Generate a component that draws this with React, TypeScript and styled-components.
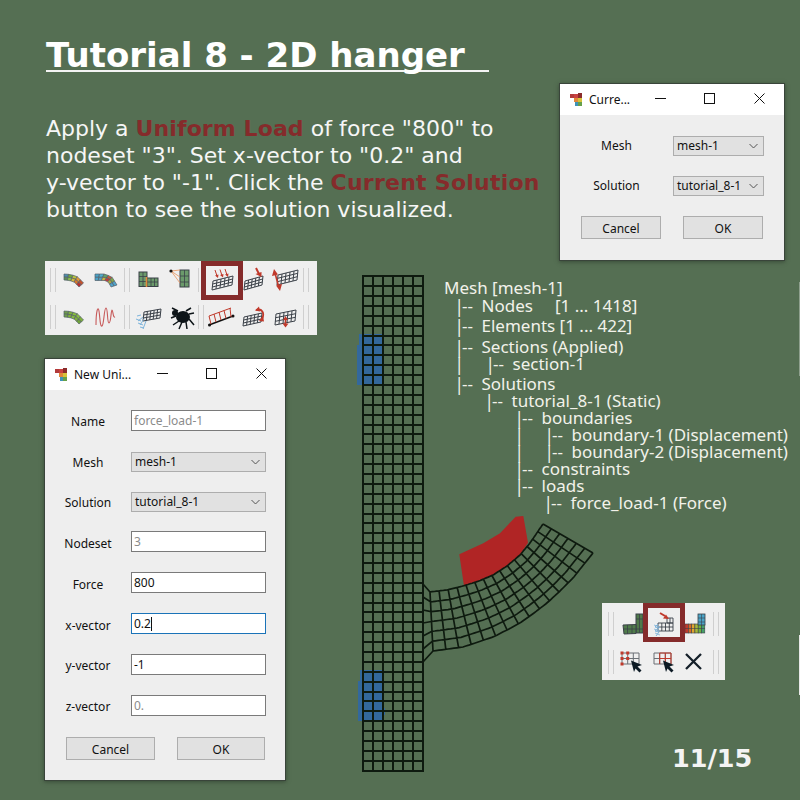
import React from "react";
import styled, { createGlobalStyle } from "styled-components";

const Global = createGlobalStyle`
  html, body { margin: 0; padding: 0; background: #556f53; }
`;

const Slide = styled.div`
  position: relative; width: 800px; height: 800px; overflow: hidden; background: #556f53;
  font-family: "DejaVu Sans", sans-serif; color: #fff;
`;
const Intro = styled.div`
  position: absolute; left: 46px; top: 34px; width: 500px;
`;
const Title = styled.h1`
  margin: 0; width: 443px; font-size: 34px; line-height: 42px; font-weight: 700; white-space: pre;
  border-bottom: 2px solid #f4f4f4; height: 36px;
`;
const Body = styled.p`
  margin: 43px 0 0; font-size: 22px; line-height: 27px; white-space: nowrap; color: #f6f6f6;
`;
const Hl = styled.b<{ $ls: number }>`color: #852b2b; letter-spacing: ${p => p.$ls}px;`;
const Tail = styled.span`letter-spacing: .06px;`;

const Win = styled.div<{ $x: number; $y: number; $w: number; $h: number }>`
  position: absolute; left: ${p => p.$x}px; top: ${p => p.$y}px; width: ${p => p.$w}px; height: ${p => p.$h}px;
  box-sizing: border-box; border: 1px solid #39443a; background: #eeeeee;
  font-family: "Noto Sans", sans-serif; font-size: 12px; color: #111;
  box-shadow: 0 1px 4px rgba(30, 40, 30, .5);
`;
const TitleBar = styled.div`
  height: 31px; background: #fff; display: flex; align-items: center; padding-left: 10px; position: relative;
`;
const TitleText = styled.span`margin-left: 5px; font-size: 12px;`;
const WinCtl = styled.svg<{ $right: number }>`
  position: absolute; right: ${p => p.$right}px; top: 9px;
`;
const FormRow = styled.div<{ $pitch: number; $labelW: number }>`
  display: grid; grid-template-columns: ${p => p.$labelW}px 1fr; align-items: center;
  height: 21px; margin-bottom: ${p => p.$pitch - 21}px;
`;
const Label = styled.span<{ $pt: number }>`text-align: center; padding-top: ${p => p.$pt}px;`;
const Field = styled.div<{ $muted?: boolean; $focus?: boolean }>`
  box-sizing: border-box; height: 21px; background: #fff; border: 1px solid ${p => p.$focus ? "#1a73b8" : "#7a7a7a"};
  color: ${p => p.$muted ? "#8b8b8b" : "#111"}; padding-left: 2px; line-height: 20px; position: relative; white-space: nowrap;
`;
const Caret = styled.i`display: inline-block; width: 1px; height: 14px; background: #111; vertical-align: -3px;`;
const Select = styled.div`
  box-sizing: border-box; height: 20px; background: #e1e1e1; border: 1px solid #adadad; padding-left: 3px;
  line-height: 17px; position: relative; white-space: nowrap;
  svg { position: absolute; right: 5px; top: 6px; }
`;
const Form = styled.div<{ $top: number; $right: number }>`
  padding: ${p => p.$top}px ${p => p.$right}px 0 0;
`;
const Buttons = styled.div<{ $left: number; $gap: number }>`
  display: flex; gap: ${p => p.$gap}px; padding-left: ${p => p.$left}px;
`;
const Btn = styled.div<{ $w: number; $h: number }>`
  box-sizing: border-box; width: ${p => p.$w}px; height: ${p => p.$h}px; background: #e1e1e1; border: 1px solid #adadad;
  display: flex; align-items: center; justify-content: center; padding-top: 1px;
`;

const Toolbar = styled.div<{ $x: number; $y: number; $w: number; $h: number; $pad: number }>`
  position: absolute; left: ${p => p.$x}px; top: ${p => p.$y}px; width: ${p => p.$w}px; height: ${p => p.$h}px;
  background: #efefef; box-sizing: border-box; padding-left: ${p => p.$pad}px; display: flex; flex-direction: column;
`;
const TRow = styled.div<{ $mt: number }>`
  display: flex; height: 24px; margin-top: ${p => p.$mt}px; align-items: center;
`;
const Sep = styled.div`
  width: 6px; height: 24px; margin: 0 1px 0 0; flex: none; box-sizing: border-box;
  border-left: 1px solid #cfcfcf; border-right: 1px solid #cfcfcf;
`;
const IconBox = styled.div`
  width: 32px; height: 32px; flex: none; display: flex; align-items: center; justify-content: center;
`;
const Gap = styled.div<{ $w: number }>`width: ${p => p.$w}px; flex: none;`;
const RedBox = styled.div<{ $x: number; $y: number }>`
  position: absolute; left: ${p => p.$x}px; top: ${p => p.$y}px; width: 42px; height: 39px; box-sizing: border-box;
  border: 5px solid #852b2b;
`;

const MeshWrap = styled.svg`position: absolute; left: 340px; top: 260px;`;
const Tree = styled.div`
  position: absolute; left: 444px; top: 279px; font-family: "Noto Sans", sans-serif; font-size: 17px; line-height: 17px;
  color: #f2f2ea; white-space: pre;
`;
const TreeLine = styled.div<{ $i: number; $mt?: number }>`
  padding-left: ${p => p.$i}px; margin-top: ${p => p.$mt || 0}px; height: 17px;
`;
const Pipe = styled.span<{ $skip?: number }>`
  display: inline-block; width: 4px; margin-left: ${p => p.$skip || 0}px; text-indent: -3.5px; transform: scaleY(1.08); color: #f2f2ea;
`;
const Dash = styled.span`display: inline-block; width: 19.5px;`;
const Page = styled.div`
  position: absolute; left: 672px; top: 743px; font-size: 25.5px; line-height: 30px; font-weight: 700; color: #f4f4f4;
`;
const EdgeMark = styled.div<{ $y: number; $h: number; $c: string }>`
  position: absolute; right: 0; top: ${p => p.$y}px; width: 1px; height: ${p => p.$h}px; background: ${p => p.$c};
`;

const Ctl = ({ r, k }: { r: number; k: "min" | "max" | "x" }) => (
  <WinCtl $right={r} width="11" height="11" viewBox="0 0 11 11" fill="none" stroke="#111">
    {k === "min" && <path d="M0 5.500h11" />}
    {k === "max" && <rect x=".5" y=".5" width="10" height="10" />}
    {k === "x" && <path d="M.5.5l10 10M10.500.5l-10 10" />}
  </WinCtl>
);
const AppIcon = () => (
  <svg width="14" height="14" viewBox="0 0 14 14">
    <rect x="0" y="1" width="4" height="4" fill="#b23b3b" />
    <rect x="4" y="1" width="4" height="4" fill="#c94141" />
    <rect x="8" y="0" width="4" height="5" fill="#8a2b2b" />
    <rect x="4" y="5" width="4" height="4" fill="#e0883a" />
    <rect x="8" y="5" width="4" height="4" fill="#d6c23a" />
    <rect x="5" y="9" width="3" height="4" fill="#3f93b8" />
    <rect x="8" y="9" width="4" height="4" fill="#66a04a" />
  </svg>
);
const Chevron = () => (
  <svg width="9" height="6" viewBox="0 0 9 6" fill="none" stroke="#555"><path d="M.5 1l4 4 4-4" /></svg>
);

/* ---- toolbar drawings ---- */
const INK = "#3b4149";
const RED = "#c0392b";
const BLUE = "#7db4dc";
const Ic = ({ children }: { children: React.ReactNode }) => (
  <IconBox><svg width="32" height="32" viewBox="0 0 32 32" fill="none">{children}</svg></IconBox>
);
const skew = (x0: number, y0: number, w: number, h: number, c: number, r: number, dy: number, dx = 1) => {
  let d = "";
  const P = (u: number, v: number) => `${(x0 + u * w + (1 - v) * dx).toFixed(1)} ${(y0 + v * h - u * dy).toFixed(1)}`;
  for (let i = 0; i <= c; i++) d += `M${P(i / c, 0)}L${P(i / c, 1)}`;
  for (let j = 0; j <= r; j++) d += `M${P(0, j / r)}L${P(1, j / r)}`;
  return d;
};
const G = (p: { x: number; y: number; w?: number; h?: number; c?: number; r?: number; dy?: number }) => (
  <path d={skew(p.x, p.y, p.w ?? 19, p.h ?? 9, p.c ?? 5, p.r ?? 3, p.dy ?? 5)} stroke={INK} strokeWidth="1" />
);
const along = (pts: number[][], t: number) => {
  const seg = pts.slice(1).map((p, i) => Math.hypot(p[0] - pts[i][0], p[1] - pts[i][1]));
  let rest = t * seg.reduce((a, b) => a + b, 0);
  for (let i = 0; i < seg.length; i++) {
    if (rest <= seg[i] || i === seg.length - 1) {
      const f = rest / seg[i];
      return [pts[i][0] + (pts[i + 1][0] - pts[i][0]) * f, pts[i][1] + (pts[i + 1][1] - pts[i][1]) * f];
    }
    rest -= seg[i];
  }
  return pts[pts.length - 1];
};
const Band = ({ up, lo, cols }: { up: number[][]; lo: number[][]; cols: string[][] }) => {
  const nc = cols[0].length;
  const q = (u: number, v: number) => {
    const a = along(up, u), b = along(lo, u);
    return `${(a[0] + (b[0] - a[0]) * v).toFixed(1)} ${(a[1] + (b[1] - a[1]) * v).toFixed(1)}`;
  };
  return (
    <Ic>
      {cols.map((row, r) => row.map((c, i) => (
        <path key={`${r}-${i}`} d={`M${q(i / nc, r / 2)}L${q((i + 1) / nc, r / 2)}L${q((i + 1) / nc, (r + 1) / 2)}L${q(i / nc, (r + 1) / 2)}Z`} fill={c} stroke="#55606a" strokeWidth=".7" />
      )))}
    </Ic>
  );
};
const UP = [[6, 10], [13, 10.5], [20, 13], [25.5, 19]];
const LO = [[6, 16], [12, 16.5], [17, 18.5], [21, 23]];
const Rainbow = () => <Band up={UP} lo={LO} cols={[["#4d8fb0", "#6da83a", "#b9c23a", "#e59a2f", "#c8502b"], ["#5f8f55", "#8cc14a", "#d6b93a", "#d9772b", "#b92f2f"]]} />;
const Rainbow2 = () => <Band up={[[5, 10], [15, 10], [22, 13], [27, 21]]} lo={[[5, 16.500], [15, 16.500], [18.500, 18], [21, 23]]} cols={[["#49a3c9", "#4fb0cf", "#5fa06a", "#c05a3a", "#7fa84a", "#4fa3c9"], ["#49a3c9", "#4f9fbf", "#d0b53a", "#c23a3a", "#b0a83a", "#4fa3c9"]]} />;
const Green = () => <Band up={UP} lo={LO} cols={[["#6f9f4a", "#7fb23a", "#86bb3e", "#86bb3e", "#7fb23a"], ["#6f9f4a", "#7fb23a", "#86bb3e", "#7fb23a", "#70a43a"]]} />;
const Merge = () => (
  <Ic>
    <rect x="7" y="8" width="8" height="14.500" fill="#6b9a6b" stroke={INK} />
    <rect x="15" y="14" width="11" height="8.500" fill="#6b9a6b" stroke={INK} />
    <path d="M11 8v14.500M7 12.500h8M7 17.500h8M19 14v8.500M22.500 14v8.500M15 18h11" stroke={INK} strokeWidth=".8" />
    <path d="M14.500 13v10" stroke="#e08a3c" strokeWidth="1.600" />
  </Ic>
);
const Probe = () => (
  <Ic>
    <rect x="14" y="6" width="9" height="17" fill="#6b9a6b" stroke={INK} />
    <path d="M18.500 6v17M14 12h9M14 18h9" stroke={INK} strokeWidth=".8" />
    <path d="M5 7L14 6M5 7L14 13M5 7L14 19" stroke="#e8935a" strokeWidth=".8" />
    <circle cx="5" cy="7" r="1.600" fill="#111" />
  </Ic>
);
const Load = () => (
  <Ic>
    <G x={6} y={17} w={20} h={9} c={5} r={3} dy={5} />
    <path d="M9 6l2 6M14 5.500l2 6M19 5l2 6" stroke={RED} strokeWidth="1" />
    <path d="M12 14l-3-2.500 3.500-1zM17 13.500l-3-2.500 3.500-1zM22 13l-3-2.500 3.500-1z" fill={RED} />
  </Ic>
);
const Force = () => (
  <Ic>
    <G x={6} y={17} w={18} h={9} />
    <path d="M18 4l3 6" stroke={RED} strokeWidth="2" />
    <path d="M23.500 13l-6-3 6-2z" fill={RED} />
  </Ic>
);
const Double = () => (
  <Ic>
    <G x={7} y={11} w={20} h={10} dy={5} />
    <path d="M5 9l4 15" stroke={RED} strokeWidth="1.600" />
    <path d="M4 5l-2 7 6-1.500zM10 27l2-7-6 1.500z" fill={RED} />
  </Ic>
);
const Wave = () => (
  <Ic>
    <path d="M6 24C6 10 8 4 9 10s1 16 3 15 2-18 4-18 1 15 3 15 2-13 3-13 1 8 3 7" stroke="#c75a5a" strokeWidth="1.100" />
  </Ic>
);
const Spray = () => (
  <Ic>
    <G x={11} y={11} w={17} h={9} dy={3} />
    <path d="M11 16L6 20M12 18L8 24M14 20L11 28M9 14L5 15" stroke={BLUE} strokeWidth="1" />
    <path d="M4 18l5 2M6 22l5 2M8 26l4 1" stroke={BLUE} strokeWidth="1" />
  </Ic>
);
const Spider = () => (
  <Ic>
    <ellipse cx="17" cy="16" rx="7" ry="6" fill="#0d1418" />
    <circle cx="9" cy="12" r="3" fill="#0d1418" />
    <path d="M12 10L6 7M13 20L7 24M16 21L13 28M20 21L21 28M23 18L28 24M23 13L28 12M20 10L25 7M10 15L5 17" stroke="#0d1418" strokeWidth="1.500" />
  </Ic>
);
const Beam = () => (
  <Ic>
    <path d="M3 24L27 15" stroke="#111" strokeWidth="1.400" />
    <circle cx="3.500" cy="24" r="1.500" fill="#111" />
    <circle cx="27" cy="15" r="1.500" fill="#111" />
    <path d="M3 15L25 7M5 23L3 15M10 21L8 13M15 19L13 11M20 17.500L18 9.500M25 16L24 7" stroke={RED} strokeWidth="1" />
  </Ic>
);
const Moment = () => (
  <Ic>
    <G x={5} y={16} w={18} h={9} dy={4} />
    <path d="M18 9c6-2 9 3 6 9" stroke={RED} strokeWidth="1.800" />
    <path d="M21 20l5 .5-1-6zM21 5.500l-4 4 5 1z" fill={RED} />
  </Ic>
);
const Thick = () => (
  <Ic>
    <G x={5} y={13} w={20} h={11} dy={4} />
    <path d="M15.500 17v7" stroke={RED} strokeWidth="1.600" />
    <path d="M12.500 22.500h6l-3 4zM13 19h5l-2.500-4z" fill={RED} />
  </Ic>
);
const L1 = () => (
  <Ic>
    <rect x="19" y="6" width="7" height="19" fill="#4f7a4a" stroke={INK} />
    <path d="M6 17l13-.5v9l-12 .5z" fill="#4f7a4a" stroke={INK} />
    <path d="M6 21h20M19 11h7M22.500 6v19M10.500 17v9M15 17v9" stroke={INK} strokeWidth=".8" />
  </Ic>
);
const LoadSol = () => (
  <Ic>
    <path d={skew(9, 15, 15, 8, 4, 2, 0, 0)} stroke={INK} strokeWidth=".9" />
    <path d={skew(18, 10, 6, 5, 2, 1, 0, 0)} stroke={INK} strokeWidth=".9" />
    <path d="M11 5l5 3" stroke={RED} strokeWidth="2" />
    <path d="M20 11l-6-.5 3-4z" fill={RED} />
    <path d="M9 16l-3 3 4 1-4 3 4 1-3 4" stroke={BLUE} strokeWidth="1" />
    <path d="M5 17l6 2M5 21l6 2M6 25l5 2" stroke={BLUE} strokeWidth=".8" />
  </Ic>
);
const L2 = () => {
  const cols = ["#c23a2e", "#d66a2a", "#e0a52e", "#a7b83a", "#6eb13d", "#45a06a"];
  return (
    <Ic>
      {cols.map((c, i) => <rect key={i} x={4 + i * 3.3} y="16" width="3.300" height="9" fill={c} stroke={INK} strokeWidth=".6" />)}
      <rect x="17" y="6" width="7" height="11" fill="#4aa3c6" stroke={INK} strokeWidth=".8" />
      <path d="M17 10h7M17 14h7M20.500 6v11M4 20.500h20" stroke={INK} strokeWidth=".6" />
    </Ic>
  );
};
const Pick = ({ tone }: { tone: "n" | "e" }) => (
  <Ic>
    <path d={skew(5, 7, 17, 11, 3, 2, 0, 0)} stroke="#6a6f75" strokeWidth="1" />
    {tone === "n" ? (
      <g fill={RED}>
        {[5, 10.700, 5, 10.700, 5].map((x, i) => <rect key={i} x={x - 1.500} y={[5.500, 5.500, 11, 11, 16.500][i]} width="3" height="3" />)}
      </g>
    ) : (
      <path d="M10.700 7H22v11M10.700 7v11M16.300 7v11M10.700 12.500H22" stroke={RED} strokeWidth="1" />
    )}
    <path d="M14 14.500l11 4.500-4.500 1.500 4 4-2 2-4-4-1.500 3.500z" fill="#0c1a24" />
  </Ic>
);
const Close = () => (
  <Ic><path d="M5 8l15 15M20 8L5 23" stroke="#15202a" strokeWidth="2.300" /></Ic>
);

/* ---- finite-element picture (data drawing) ---- */
const OX = 340, OY = 260;
const upper = [[430, 592], [447, 590], [463, 586], [479, 581], [493, 575], [507, 566], [520, 555], [530, 543], [543, 524]];
const lower = [[433, 651], [448, 649], [463, 647], [478, 642], [493, 637], [507, 630], [520, 623], [534, 613], [547, 603], [560, 591], [573, 578], [593, 553]];
const NC = 15, NR = 6;
const armPaths = () => {
  let d = "";
  const pt = (u: number, v: number) => {
    const a = along(upper, u), b = along(lower, u);
    return [(a[0] + (b[0] - a[0]) * v) - OX, (a[1] + (b[1] - a[1]) * v) - OY];
  };
  for (let j = 0; j <= NR; j++) {
    const l: string[] = [];
    for (let i = 0; i <= 64; i++) { const p = pt(i / 64, j / NR); l.push(`${p[0].toFixed(1)} ${p[1].toFixed(1)}`); }
    d += "M" + l.join("L");
    const s = pt(0, j / NR);
    d += `M${s[0].toFixed(1)} ${s[1].toFixed(1)}L83 ${(324 + j * 13).toFixed(1)}`;
  }
  for (let i = 0; i <= NC; i++) {
    const p = pt(i / NC, 0), q = pt(i / NC, 1);
    d += `M${p[0].toFixed(1)} ${p[1].toFixed(1)}L${q[0].toFixed(1)} ${q[1].toFixed(1)}`;
  }
  return d;
};
const CW = 10.05, RH = 9.89, X0 = 22.7, Y0 = 16.2;
const gridPaths = () => {
  let d = "";
  const top = Math.round(Y0), bottom = Math.round(Y0 + 50 * RH);
  const left = Math.round(X0), right = Math.round(X0 + 6 * CW);
  for (let i = 0; i <= 6; i++) d += `M${Math.round(X0 + i * CW)} ${top - 1}V${bottom + 1}`;
  for (let j = 0; j <= 50; j++) d += `M${left - 1} ${Math.round(Y0 + j * RH)}H${right + 1}`;
  return d;
};
const MeshPicture = () => (
  <MeshWrap width="270" height="520" viewBox="0 0 270 520" fill="none">
    <g fill="#33689c">
      <path d="M19 74H43V125H17V85H19Z" />
      <path d="M20 410H43V448H45V455H43V461H18V421H20Z" />
    </g>
    <path d="M124 326L119.300 294.300L143.300 283.300L160 273.300L175.700 256.700L183.300 256L188 282.700L180 295L167 306L153 315L139 321Z" fill="#b02525" />
    <path d={gridPaths()} stroke="#0e1a0f" strokeWidth="2" />
    <path d={armPaths()} stroke="#0e1a0f" strokeWidth="1.700" />
  </MeshWrap>
);

const TREE: { pipes: number[]; text: string; mt?: number }[] = [
  { pipes: [458], text: "Nodes     [1 ... 1418]", mt: 1 },
  { pipes: [458], text: "Elements [1 ... 422]", mt: 3 },
  { pipes: [458], text: "Sections (Applied)", mt: 4 },
  { pipes: [458, 489], text: "section-1" },
  { pipes: [458], text: "Solutions", mt: 3 },
  { pipes: [488], text: "tutorial_8-1 (Static)" },
  { pipes: [518], text: "boundaries" },
  { pipes: [518, 548], text: "boundary-1 (Displacement)" },
  { pipes: [518, 548], text: "boundary-2 (Displacement)" },
  { pipes: [518], text: "constraints" },
  { pipes: [518], text: "loads" },
  { pipes: [547], text: "force_load-1 (Force)" },
];

const App = () => (
  <Slide>
    <Global />
    <Intro>
      <Title>Tutorial 8 - 2D hanger</Title>
      <Body>
        Apply a <Hl $ls={0.1}>Uniform Load</Hl> <Tail>of force "800" to</Tail><br />
        nodeset "3". Set x-vector to "0.2" and<br />
        y-vector to "-1". Click the <Hl $ls={0.25}>Current Solution</Hl><br />
        button to see the solution visualized.
      </Body>
    </Intro>

    <Win $x={559} $y={83} $w={226} $h={178}>
      <TitleBar><AppIcon /><TitleText>Curre...</TitleText><Ctl r={118} k="min" /><Ctl r={69} k="max" /><Ctl r={19} k="x" /></TitleBar>
      <Form $top={20} $right={20}>
        <FormRow $pitch={40} $labelW={113}><Label $pt={0}>Mesh</Label><Select>mesh-1<Chevron /></Select></FormRow>
        <FormRow $pitch={41} $labelW={113}><Label $pt={0}>Solution</Label><Select>tutorial_8-1<Chevron /></Select></FormRow>
      </Form>
      <Buttons $left={21} $gap={22}>
        <Btn $w={80} $h={23}>Cancel</Btn><Btn $w={80} $h={23}>OK</Btn>
      </Buttons>
    </Win>

    <Win $x={44} $y={358} $w={242} $h={423}>
      <TitleBar><AppIcon /><TitleText>New Uni...</TitleText><Ctl r={117} k="min" /><Ctl r={68} k="max" /><Ctl r={18} k="x" /></TitleBar>
      <Form $top={20} $right={19}>
        <FormRow $pitch={41} $labelW={86}><Label $pt={1}>Name</Label><Field $muted>force_load-1</Field></FormRow>
        <FormRow $pitch={40} $labelW={86}><Label $pt={1}>Mesh</Label><Select>mesh-1<Chevron /></Select></FormRow>
        <FormRow $pitch={40} $labelW={86}><Label $pt={1}>Solution</Label><Select>tutorial_8-1<Chevron /></Select></FormRow>
        <FormRow $pitch={41} $labelW={86}><Label $pt={3}>Nodeset</Label><Field $muted>3</Field></FormRow>
        <FormRow $pitch={41} $labelW={86}><Label $pt={3}>Force</Label><Field>800</Field></FormRow>
        <FormRow $pitch={41} $labelW={86}><Label $pt={3}>x-vector</Label><Field $focus>0.2<Caret /></Field></FormRow>
        <FormRow $pitch={41} $labelW={86}><Label $pt={1}>y-vector</Label><Field>-1</Field></FormRow>
        <FormRow $pitch={42} $labelW={86}><Label $pt={1}>z-vector</Label><Field $muted>0.</Field></FormRow>
      </Form>
      <Buttons $left={21} $gap={22}>
        <Btn $w={89} $h={23}>Cancel</Btn><Btn $w={88} $h={23}>OK</Btn>
      </Buttons>
    </Win>

    <Toolbar $x={45} $y={261} $w={272} $h={74} $pad={5}>
      <TRow $mt={7}>
        <Sep /><Gap $w={1} /><Rainbow /><Rainbow2 /><Gap $w={2} /><Sep /><Gap $w={1} /><Merge /><Gap $w={2} /><Probe /><Sep /><Gap $w={1} /><Load /><Force /><Double /><Gap $w={1} /><Sep />
      </TRow>
      <TRow $mt={13}>
        <Sep /><Gap $w={1} /><Green /><Wave /><Gap $w={2} /><Sep /><Gap $w={1} /><Spray /><Gap $w={2} /><Spider /><Sep /><Gap $w={1} /><Beam /><Moment /><Thick /><Gap $w={1} /><Sep />
      </TRow>
    </Toolbar>
    <RedBox $x={201} $y={261} />

    <Toolbar $x={602} $y={603} $w={123} $h={77} $pad={6}>
      <TRow $mt={9}>
        <Sep /><Gap $w={2} /><L1 /><LoadSol /><L2 /><Sep />
      </TRow>
      <TRow $mt={14}>
        <Sep /><Gap $w={2} /><Pick tone="n" /><Pick tone="e" /><Close /><Sep />
      </TRow>
    </Toolbar>
    <RedBox $x={643} $y={603} />

    <MeshPicture />

    <Tree>
      <TreeLine $i={0}>Mesh [mesh-1]</TreeLine>
      {TREE.map(l => (
        <TreeLine key={l.text} $i={l.pipes[0] - 444} $mt={l.mt}>
          {l.pipes.map((x, i) => <Pipe key={x} $skip={i ? x - l.pipes[i - 1] - 4 : 0}>|</Pipe>)}
          <Dash>--</Dash>{l.text}
        </TreeLine>
      ))}
    </Tree>

    <Page>11/15</Page>
    <EdgeMark $y={282} $h={94} $c="#8fa08e" />
    <EdgeMark $y={635} $h={60} $c="#e8e8e8" />
  </Slide>
);

export default App;
